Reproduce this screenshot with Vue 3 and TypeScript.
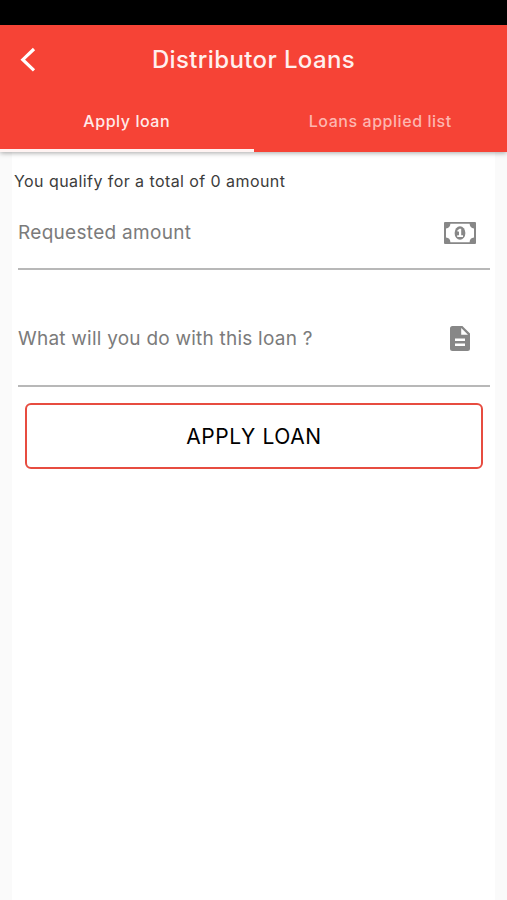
<script setup lang="ts">
import { ref } from 'vue'

const tabs: string[] = ['Apply loan', 'Loans applied list']
const activeTab = ref(0)
const eligibleAmount = ref(0)
</script>

<template>
  <div class="screen">
    <div class="status-bar"></div>
    <header class="app-bar">
      <div class="title-row">
        <button class="back" aria-label="Back">
          <svg width="17" height="26" viewBox="0 0 17 26">
            <path d="M15 2L3.8 12.7L15 23.4" fill="none" stroke="#fff" stroke-width="3.2" />
          </svg>
        </button>
        <h1>Distributor Loans</h1>
      </div>
      <nav class="tabs">
        <button
          v-for="(tab, index) in tabs"
          :key="tab"
          class="tab"
          :class="{ active: index === activeTab }"
          @click="activeTab = index"
        >
          <span class="tab-label">{{ tab }}</span>
        </button>
      </nav>
    </header>
    <main class="sheet">
      <p class="summary">You qualify for a total of {{ eligibleAmount }} amount</p>
      <div class="field amount">
        <span class="placeholder">Requested amount</span>
        <svg class="icon" width="32" height="22" viewBox="0 0 32 22">
          <path
            fill="#878787"
            fill-rule="evenodd"
            d="M1 0H31Q32 0 32 1V21Q32 22 31 22H1Q0 22 0 21V1Q0 0 1 0ZM6.4 1.8Q6.2 6 2 6.4V15.6Q6.2 16 6.4 20.2H25.6Q25.8 16 30 15.6V6.4Q25.8 6 25.6 1.8Z"
          />
          <ellipse cx="16" cy="11" rx="5.4" ry="6.8" fill="#878787" />
          <path d="M13.3 8.6L15.5 6.8H17.2V13.2H19V15H13.2V13.2H15V9.2L13.9 10Z" fill="#fff" />
        </svg>
      </div>
      <div class="field purpose">
        <span class="placeholder">What will you do with this loan ?</span>
        <svg class="icon doc" width="20" height="25" viewBox="0 0 20 25">
          <path
            fill="#878787"
            fill-rule="evenodd"
            d="M2.5 0H12.4L20 7.6V22.5Q20 25 17.5 25H2.5Q0 25 0 22.5V2.5Q0 0 2.5 0ZM11.2 2V8.8H18ZM5 12.4V14.9H15V12.4ZM5 17.4V19.9H15V17.4Z"
          />
        </svg>
      </div>
      <button class="submit">APPLY LOAN</button>
    </main>
  </div>
</template>

<style>
body {
  margin: 0;
  background: #fafafa;
}
</style>

<style scoped>
.screen {
  display: flex;
  flex-direction: column;
  box-sizing: border-box;
  width: 100%;
  height: 900px;
  overflow: hidden;
  background: #fafafa;
  font-family: Inter, Roboto, sans-serif;
}
button {
  font-family: inherit;
  border: 0;
  padding: 0;
  background: none;
}
.status-bar {
  height: 25px;
  flex: none;
  background: #000;
}
.app-bar {
  position: relative;
  z-index: 1;
  flex: none;
  height: 127px;
  background: #f64336;
  box-shadow: 0 1px 5px rgba(0, 0, 0, 0.35);
}
.title-row {
  display: grid;
  grid-template-columns: 60px 1fr 60px;
  align-items: center;
  height: 69px;
}
.back {
  display: flex;
  padding-left: 19px;
}
h1 {
  margin: 0;
  text-align: center;
  white-space: nowrap;
  color: #fff0ee;
  font-size: 24px;
  font-weight: 500;
  line-height: 30px;
  letter-spacing: 0.38px;
}
.tabs {
  display: grid;
  grid-template-columns: 1fr 1fr;
  height: 58px;
}
.tab {
  box-sizing: border-box;
  padding-bottom: 1px;
  border-bottom: 3px solid transparent;
  color: #fdb6b0;
  font-size: 16px;
  font-weight: 500;
  line-height: 20px;
  letter-spacing: 0.55px;
}
.tab.active {
  color: #ffeae8;
  border-bottom-color: #fff3f2;
}
.sheet {
  display: flex;
  flex-direction: column;
  flex: 1;
  margin: 0 12px;
  background: #fff;
}
.summary {
  margin: 19px 0 0 2px;
  color: #3c3c3c;
  font-size: 16px;
  line-height: 20px;
  letter-spacing: 0.43px;
}
.field {
  display: flex;
  align-items: center;
  justify-content: space-between;
  box-sizing: border-box;
  margin: 0 5px 0 6px;
  padding-right: 14px;
  border-bottom: 2px solid #b8b8b8;
}
.amount {
  height: 72px;
  margin-top: 7px;
}
.purpose {
  height: 94px;
  margin-top: 23px;
}
.placeholder {
  color: #7b7b7b;
  font-size: 19px;
  line-height: 24px;
  letter-spacing: 0.3px;
}
.purpose .placeholder {
  letter-spacing: 0.23px;
}
.doc {
  margin-right: 6px;
  margin-bottom: 2px;
}
.submit {
  box-sizing: border-box;
  height: 66px;
  margin: 16px 12px 0 13px;
  border: 2px solid #e74c40;
  border-radius: 6px;
  color: #000;
  font-size: 21px;
  font-weight: 400;
  letter-spacing: 0.6px;
}
</style>
